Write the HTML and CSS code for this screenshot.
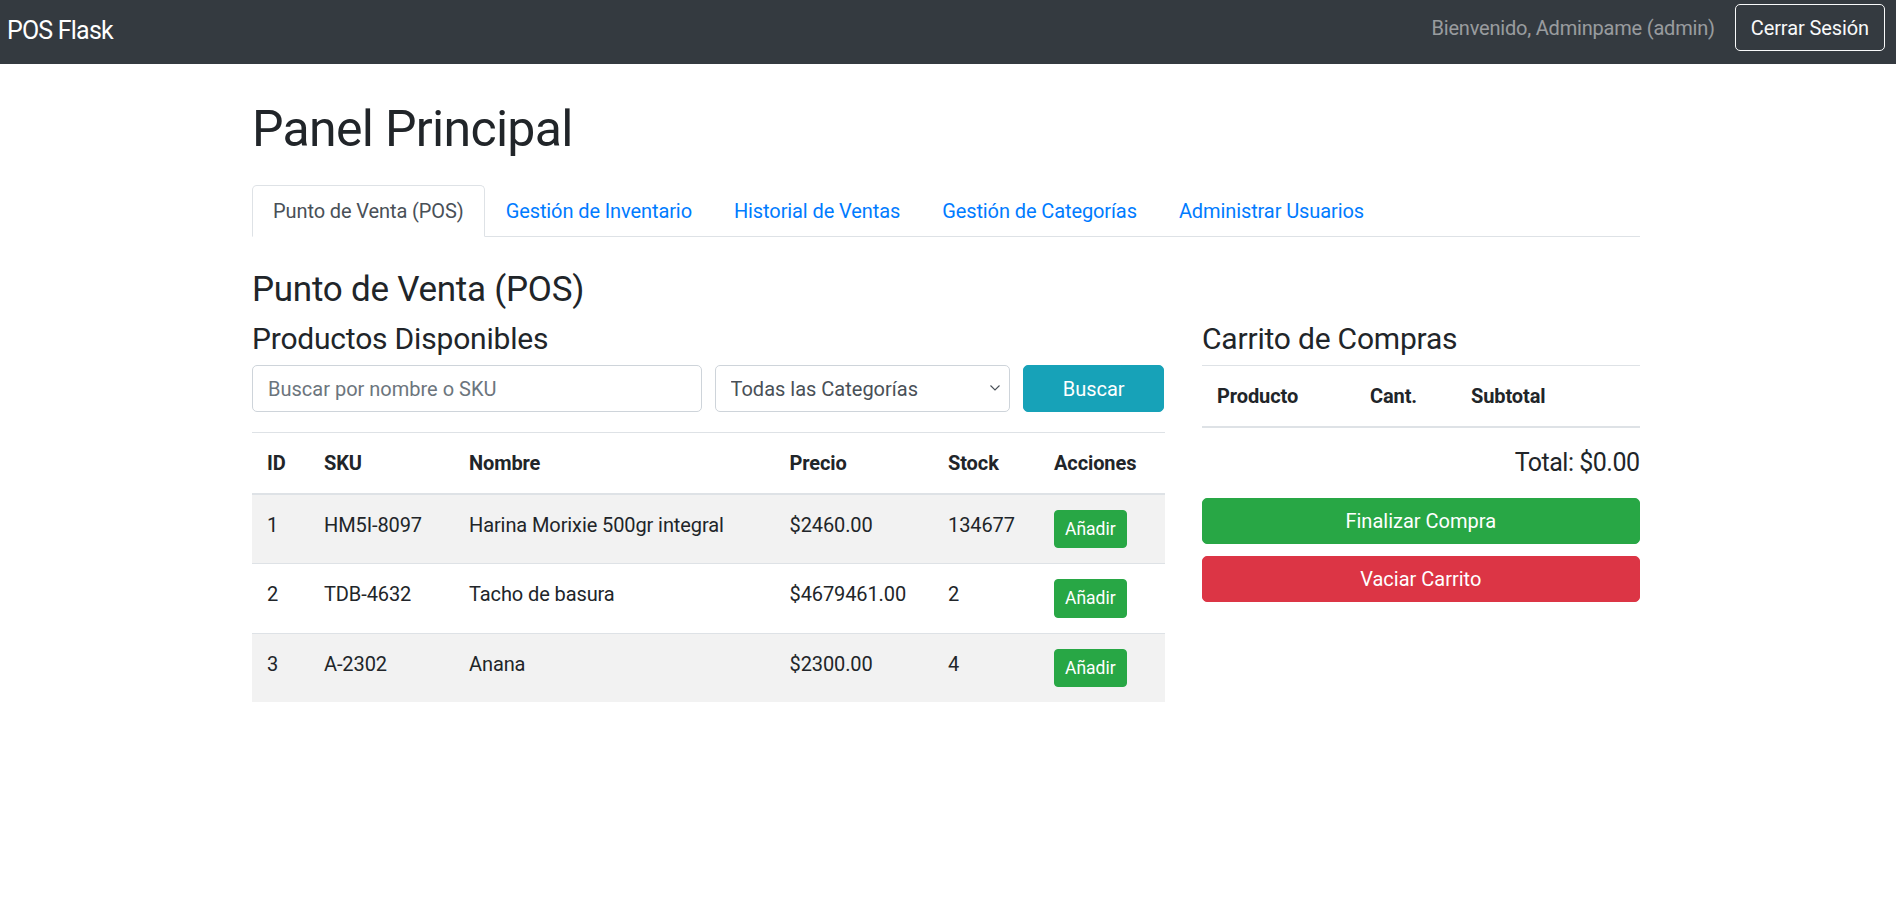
FILE: index.html
```html
<!DOCTYPE html>
<html lang="es">
<head>
<meta charset="utf-8">
<title>POS Flask - Panel Principal</title>
<link rel="stylesheet" href="styles.css">
</head>
<body>
<nav class="navbar">
  <a class="brand" href="#">POS Flask</a>
  <div class="nav-right">
    <span class="welcome">Bienvenido, Adminpame (admin)</span>
    <a class="btn-logout" href="#">Cerrar Sesión</a>
  </div>
</nav>

<main class="container">
  <h1 class="page-title">Panel Principal</h1>

  <ul class="tabs">
    <li class="tab"><a class="tab-link active" href="#">Punto de Venta (POS)</a></li>
    <li class="tab"><a class="tab-link" href="#">Gestión de Inventario</a></li>
    <li class="tab"><a class="tab-link" href="#">Historial de Ventas</a></li>
    <li class="tab"><a class="tab-link" href="#">Gestión de Categorías</a></li>
    <li class="tab"><a class="tab-link" href="#">Administrar Usuarios</a></li>
  </ul>

  <section class="tab-pane">
    <h3 class="section-title">Punto de Venta (POS)</h3>
    <div class="pos-row">
      <div class="col-products">
        <h4 class="sub-title">Productos Disponibles</h4>
        <form class="search-row">
          <input class="field" type="text" placeholder="Buscar por nombre o SKU">
          <div class="select-wrap">
            <select class="field select">
              <option>Todas las Categorías</option>
            </select>
            <svg class="chevron" width="10" height="6" viewBox="0 0 10 6"><polyline points="0.5,0.5 5,5 9.5,0.5" fill="none" stroke="#495057" stroke-width="1.1"/></svg>
          </div>
          <button class="btn btn-info" type="button">Buscar</button>
        </form>

        <table class="table striped products">
          <colgroup>
            <col class="c-id"><col class="c-sku"><col class="c-name"><col class="c-price"><col class="c-stock"><col class="c-act">
          </colgroup>
          <thead>
            <tr><th>ID</th><th>SKU</th><th>Nombre</th><th>Precio</th><th>Stock</th><th>Acciones</th></tr>
          </thead>
          <tbody>
            <tr><td>1</td><td>HM5I-8097</td><td>Harina Morixie 500gr integral</td><td>$2460.00</td><td>134677</td><td><button class="btn-sm" type="button">Añadir</button></td></tr>
            <tr><td>2</td><td>TDB-4632</td><td>Tacho de basura</td><td>$4679461.00</td><td>2</td><td><button class="btn-sm" type="button">Añadir</button></td></tr>
            <tr><td>3</td><td>A-2302</td><td>Anana</td><td>$2300.00</td><td>4</td><td><button class="btn-sm" type="button">Añadir</button></td></tr>
          </tbody>
        </table>
      </div>

      <div class="col-cart">
        <h4 class="sub-title">Carrito de Compras</h4>
        <table class="table cart">
          <colgroup><col class="c-prod"><col class="c-qty"><col class="c-sub"></colgroup>
          <thead>
            <tr><th>Producto</th><th>Cant.</th><th>Subtotal</th></tr>
          </thead>
          <tbody></tbody>
        </table>
        <h5 class="total">Total: $0.00</h5>
        <button class="btn btn-block btn-success" type="button">Finalizar Compra</button>
        <button class="btn btn-block btn-danger" type="button">Vaciar Carrito</button>
      </div>
    </div>
  </section>
</main>
</body>
</html>
```

FILE: styles.css
```css
* { box-sizing: border-box; }

body {
  margin: 0;
  font-family: Roboto, "Liberation Sans", sans-serif;
  font-size: 20px;
  line-height: 1.5;
  letter-spacing: -0.1px;
  color: #212529;
  background: #fff;
}

/* Navbar */
.navbar {
  height: 64px;
  background: #343a40;
  display: flex;
  justify-content: space-between;
  align-items: flex-start;
  padding: 0 11px 0 7px;
}
.brand {
  color: #fff;
  font-size: 25px;
  line-height: 37.5px;
  letter-spacing: -0.8px;
  margin-top: 12px;
  text-decoration: none;
}
.nav-right {
  display: flex;
  align-items: center;
  gap: 20px;
  margin-top: 4px;
}
.welcome {
  color: rgba(255, 255, 255, 0.5);
  line-height: 30px;
  letter-spacing: -0.2px;
}
.btn-logout {
  display: block;
  border: 1px solid #f8f9fa;
  border-radius: 5px;
  color: #f8f9fa;
  padding: 7.5px 15px;
  line-height: 30px;
  text-decoration: none;
}

/* Container */
.container {
  width: 1387.5px;
  margin: 35px 0 0 calc(50% - 696px);
}

.page-title {
  font-size: 50px;
  line-height: 60px;
  font-weight: 400;
  letter-spacing: -0.7px;
  margin: 0 0 26px;
}

/* Tabs */
.tabs {
  display: flex;
  list-style: none;
  margin: 0;
  padding: 0;
  border-bottom: 1px solid #dee2e6;
}
.tab { margin-bottom: -1px; }
.tab-link {
  display: block;
  padding: 10px 20px;
  border: 1px solid transparent;
  border-radius: 5px 5px 0 0;
  color: #007bff;
  text-decoration: none;
  line-height: 30px;
}
.tab-link.active {
  color: #495057;
  background: #fff;
  border-color: #dee2e6 #dee2e6 #fff;
}

.tab-pane { margin-top: 30px; }

.section-title {
  font-size: 35px;
  line-height: 42px;
  font-weight: 400;
  letter-spacing: -0.25px;
  padding-top: 2px;
  margin: 0 0 8px;
}
.sub-title {
  font-size: 30px;
  line-height: 36px;
  font-weight: 400;
  letter-spacing: -0.2px;
  padding-top: 2px;
  margin: 0 0 8px;
}

.pos-row {
  display: grid;
  grid-template-columns: 912.5px 437.5px;
  column-gap: 37.5px;
  align-items: start;
}

/* Search form */
.search-row {
  display: grid;
  grid-template-columns: 450px 295.83px 141.67px;
  column-gap: 12.5px;
  margin: 0 0 20px;
}
.field {
  display: block;
  width: 100%;
  height: 47px;
  border: 1px solid #ced4da;
  border-radius: 5px;
  padding: 7.5px 15px;
  font: inherit;
  line-height: 30px;
  color: #495057;
  background: #fff;
}
.field::placeholder { color: #6c757d; }
.select-wrap { position: relative; }
.select {
  appearance: none;
  -webkit-appearance: none;
  padding-right: 30px;
}
.chevron {
  position: absolute;
  right: 10px;
  top: 20px;
  pointer-events: none;
}

/* Buttons */
.btn {
  display: block;
  border: 1px solid transparent;
  border-radius: 5px;
  padding: 7.5px 15px;
  font: inherit;
  line-height: 30px;
  color: #fff;
  text-align: center;
  cursor: pointer;
}
.btn-info { background: #17a2b8; border-color: #17a2b8; width: 100%; }
.btn-block { width: 100%; height: 46px; padding-top: 7px; padding-bottom: 7px; }
.btn-block + .btn-block { margin-top: 12px; }
.btn-success { background: #28a745; border-color: #28a745; }
.btn-danger { background: #dc3545; border-color: #dc3545; }

.btn-sm {
  display: inline-block;
  border: 1px solid #28a745;
  background: #28a745;
  color: #fff;
  border-radius: 4px;
  padding: 5px 10px;
  font-family: inherit;
  font-size: 17.5px;
  line-height: 26.25px;
  cursor: pointer;
}

/* Tables */
.table {
  width: 100%;
  border-collapse: collapse;
  table-layout: fixed;
  margin-bottom: 20px;
}
.table th,
.table td {
  padding: 15px;
  border-top: 1px solid #dee2e6;
  text-align: left;
  vertical-align: top;
  line-height: 30px;
}
.table thead th {
  border-bottom: 2px solid #dee2e6;
  vertical-align: bottom;
  font-weight: 700;
}
.striped tbody tr:nth-child(odd) { background: rgba(0, 0, 0, 0.05); }

.c-id { width: 57px; }
.c-sku { width: 145px; }
.c-name { width: 320.5px; }
.c-price { width: 158.5px; }
.c-stock { width: 106px; }
.c-act { width: 125.5px; }

.c-prod { width: 153px; }
.c-qty { width: 101px; }
.c-sub { width: 183.5px; }

.total {
  font-size: 25px;
  line-height: 30px;
  font-weight: 400;
  letter-spacing: -0.5px;
  text-align: right;
  margin: 0 0 20px;
}
```
